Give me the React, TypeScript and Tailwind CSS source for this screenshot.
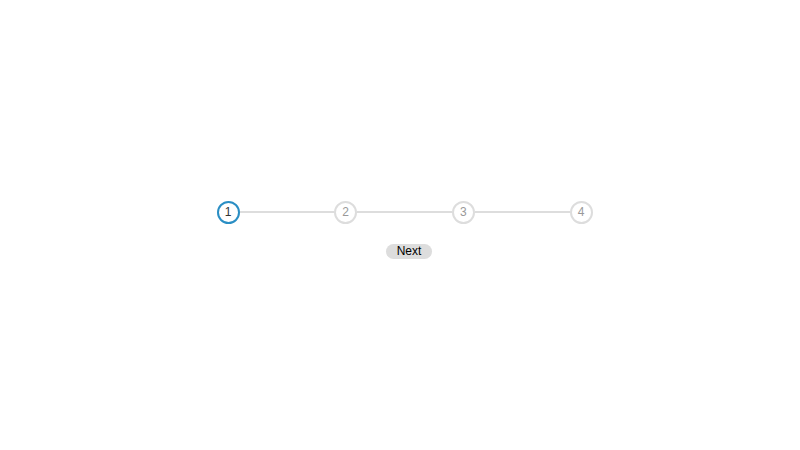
const steps = [1, 2, 3, 4];

export default function App() {
  const active = 1;
  return (
    <div
      className="h-[450px] w-[800px] bg-white flex flex-col items-center justify-center"
      style={{ fontFamily: '"Liberation Sans", Arial, sans-serif' }}
    >
      <div className="flex items-center w-[376px] ml-[9px] mt-[9px]">
        {steps.map((s, i) => (
          <div key={s} className={i === 0 ? "flex items-center" : "flex items-center flex-1"}>
            {i > 0 && <div className="flex-1 h-[2px] bg-[#dddddd]" />}
            <div
              className={
                s === active
                  ? "w-[23px] h-[23px] rounded-full border-2 border-[#2a8ec4] text-[#333333] text-[12px] flex items-center justify-center"
                  : "w-[23px] h-[23px] rounded-full border-2 border-[#dddddd] text-[#999999] text-[12px] flex items-center justify-center"
              }
            >
              {s}
            </div>
          </div>
        ))}
      </div>
      <button className="mt-[20px] ml-[18px] w-[46px] h-[15px] rounded-full bg-[#dddddd] text-[12px] leading-none text-black flex items-center justify-center">
        Next
      </button>
    </div>
  );
}
